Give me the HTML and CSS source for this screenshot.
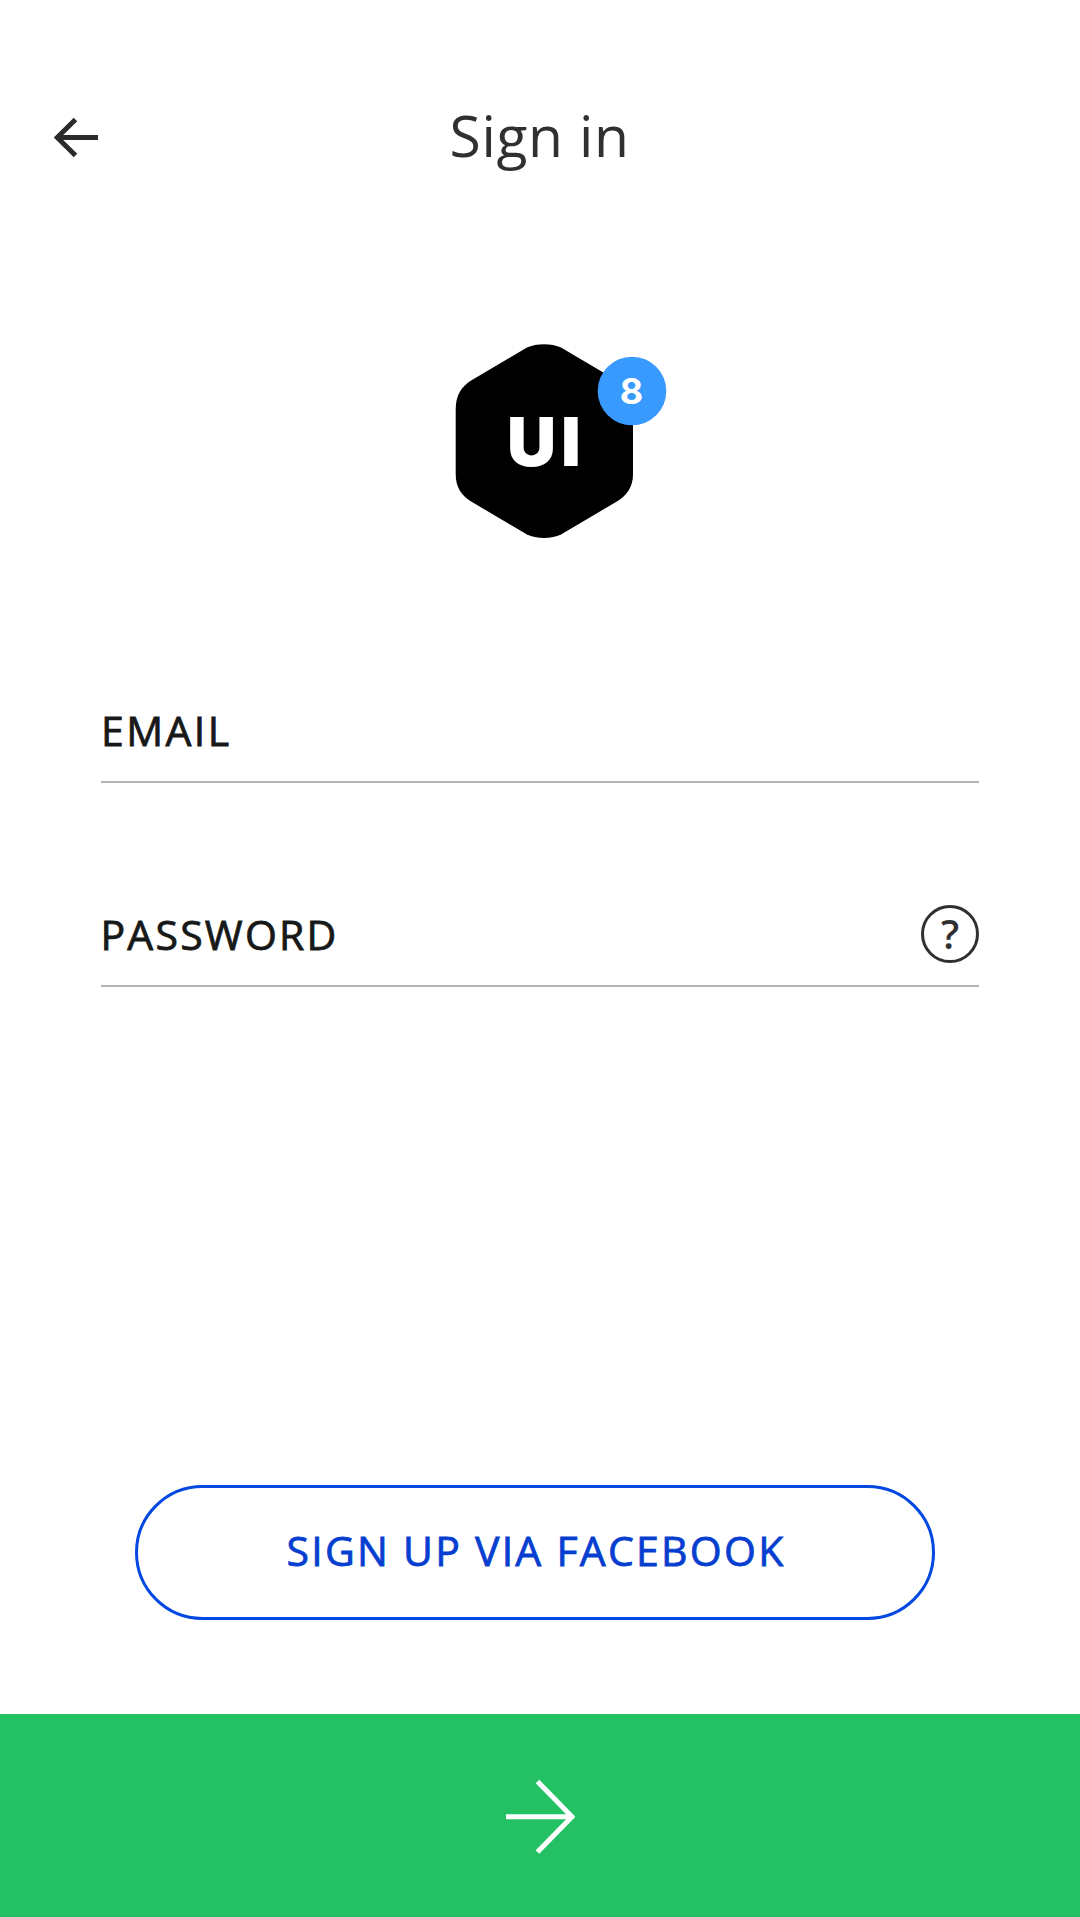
FILE: index.html
```html
<!DOCTYPE html>
<html lang="en">
<head>
<meta charset="utf-8">
<title>Sign in</title>
<link rel="stylesheet" href="styles.css">
</head>
<body>
<main class="screen">
  <header class="header">
    <a class="back" href="#" aria-label="Back">
      <svg width="46" height="42" viewBox="0 0 46 42" fill="none"><path d="M21.5 2.5 3.2 20.5 21.5 38.5M4 20.5H44" stroke="#2b2b2d" stroke-width="5"/></svg>
    </a>
    <h1 class="title">Sign in</h1>
  </header>
  <div class="brand">
    <svg class="logo" width="212" height="196" viewBox="455 343 212 196" role="img" aria-label="UI8">
      <path d="M527 347.500C536 343 552 343 561 347.500L616 380C627 386.500 633 396 633 409V474C633 487 627 495.500 616 502L561 534.500C552 539 536 539 527 534.500L472 502C461 495.500 455.700 487 455.700 474V409C455.700 396 461 386.500 472 380Z" fill="#000"/>
      <text class="logo-text" x="507 561" y="465.500">UI</text>
      <circle cx="632" cy="391" r="34.300" fill="#3899ff"/>
      <text class="badge-text" x="631.500" y="403.500">8</text>
    </svg>
  </div>
  <form class="form">
    <div class="field">
      <span class="label label-email">EMAIL</span>
    </div>
    <div class="field field-password">
      <span class="label">PASSWORD</span>
      <span class="help">?</span>
    </div>
  </form>
  <a class="facebook" href="#"><span class="facebook-text">SIGN UP VIA FACEBOOK</span></a>
  <button class="submit" type="button" aria-label="Continue">
    <svg width="70" height="76" viewBox="0 0 70 76" fill="none"><path d="M32.500 2.500 67 37.800 32.500 73M1 37.800H65" stroke="#fff" stroke-width="5"/></svg>
  </button>
</main>
</body>
</html>
```

FILE: styles.css
```css
* { box-sizing: border-box; }
body { margin: 0; background: #fff; font-family: "Open Sans", "Noto Sans", sans-serif; }
.screen { display: flex; flex-direction: column; width: 1080px; height: 1917px; background: #fff; }
.header { display: grid; grid-template-columns: 100px 1fr 100px; align-items: center; height: 110px; margin-top: 80px; }
.back { display: flex; padding: 5px 0 0 54px; }
.title { margin: 0; padding-right: 1px; font-size: 57px; line-height: 110px; font-weight: 400; color: #303032; text-align: center; letter-spacing: 0.6px; }
.brand { height: 196px; margin: 153px 0 0 455px; }
.logo { display: block; overflow: visible; }
.logo-text { font: 900 68px "Inter", sans-serif; fill: #fff; }
.badge-text { font: 700 36px "Inter", sans-serif; fill: #fff; text-anchor: middle; }
.form { margin: 139px 101px 0; }
.field { display: flex; align-items: center; justify-content: space-between; height: 105px; border-bottom: 2px solid #b4b4b4; }
.field-password { height: 107px; margin-top: 97px; padding-top: 3px; }
.label { margin-left: -0.5px; font-size: 41px; line-height: 56px; font-weight: 400; color: #171818; letter-spacing: 2.2px; -webkit-text-stroke: 0.8px #171818; }
.label-email { margin-left: 0; letter-spacing: 2.4px; }
.help { display: flex; align-items: center; justify-content: center; width: 58px; height: 58px; border: 3px solid #303032; border-radius: 50%; font-size: 40px; line-height: 1; font-weight: 600; color: #303032; }
.facebook { display: flex; align-items: center; justify-content: center; width: 800px; height: 135px; margin: 498px 0 0 135px; padding: 0 0 5px 2px; border: 3px solid #0348e0; border-radius: 68px; text-decoration: none; }
.facebook-text { font-size: 41px; line-height: 56px; font-weight: 400; color: #063fd0; letter-spacing: 2.25px; -webkit-text-stroke: 0.8px #063fd0; }
.submit { display: flex; align-items: center; justify-content: center; width: 1080px; height: 203px; margin-top: auto; padding: 2px 0 0; border: 0; background: #23c164; }
```
